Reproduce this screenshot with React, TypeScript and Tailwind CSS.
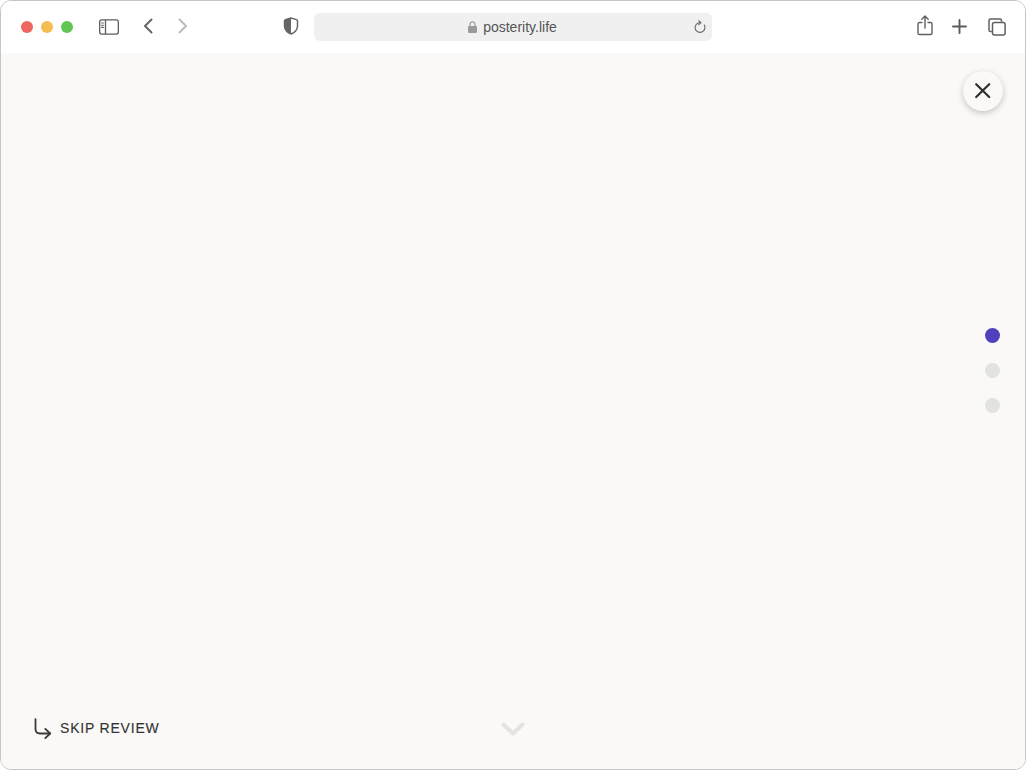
import React from "react";

function Sidebar() {
  return (
    <svg width="20" height="16" viewBox="0 0 20 16" fill="none" stroke="#5c5c5c" strokeWidth="1.3">
      <rect x="0.650" y="0.900" width="18.700" height="14.200" rx="2" />
      <path d="M6.500 1v14" />
      <path d="M2.200 4h2.600M2.200 6.200h2.600M2.200 8.400h2.600" strokeWidth="1.100" />
    </svg>
  );
}

function Chevron({ dir, color }: { dir: "l" | "r"; color: string }) {
  return (
    <svg className="-mt-[1px]" width="10" height="16" viewBox="0 0 10 16" fill="none" stroke={color} strokeWidth="2" strokeLinecap="round" strokeLinejoin="round">
      <path d={dir === "l" ? "M8.500 1.500 2 8l6.500 6.500" : "M1.500 1.500 8 8l-6.500 6.500"} />
    </svg>
  );
}

function Shield() {
  return (
    <svg className="-mt-[1px]" width="16" height="18" viewBox="0 0 16 18" fill="none">
      <path d="M8 1 2.500 2.600c-.6.2-1 .6-1 1.200V9c0 4 3.500 7 6.500 8 3-1 6.500-4 6.500-8V3.800c0-.6-.4-1-1-1.200L8 1Z" fill="#fff" stroke="#666" strokeWidth="1.500" />
      <path d="M8 1 2.500 2.600c-.6.2-1 .6-1 1.200V9c0 4 3.500 7 6.500 8V1Z" fill="#666" />
    </svg>
  );
}

function Lock() {
  return (
    <svg width="9" height="12" viewBox="0 0 9 12" fill="none">
      <path d="M2 5.500V3.400a2.500 2.500 0 0 1 5 0v2.100" stroke="#999" strokeWidth="1.200" />
      <rect x="0" y="5" width="9" height="7" rx="1.200" fill="#999" />
    </svg>
  );
}

function Reload() {
  return (
    <svg width="12" height="14" viewBox="0 0 12 14" fill="none" stroke="#666" strokeWidth="1.100" strokeLinecap="round" strokeLinejoin="round">
      <path d="M6 2.600a4.900 4.900 0 1 0 4.900 4.900c0-.9-.2-1.700-.6-2.400" />
      <path d="M4.800.6 7 2.600 4.800 4.600" />
    </svg>
  );
}

function Share() {
  return (
    <svg className="-mt-[2px]" width="16" height="21" viewBox="0 0 16 21" fill="none" stroke="#5f5f5f" strokeWidth="1.400" strokeLinecap="round" strokeLinejoin="round">
      <path d="M5 7.500H2.600c-.9 0-1.600.7-1.600 1.600v8.800c0 .9.7 1.600 1.600 1.600h10.800c.9 0 1.600-.7 1.600-1.600V9.100c0-.9-.7-1.600-1.600-1.600H11" />
      <path d="M8 13V1.200M4.800 4.200 8 1l3.200 3.200" />
    </svg>
  );
}

function Plus() {
  return (
    <svg width="15" height="15" viewBox="0 0 15 15" fill="none" stroke="#5c5c5c" strokeWidth="1.900" strokeLinecap="round">
      <path d="M7.500 1v13M1 7.500h13" />
    </svg>
  );
}

function Tabs() {
  return (
    <svg width="18" height="18" viewBox="0 0 18 18" fill="none" stroke="#5f5f5f" strokeWidth="1.500">
      <path d="M3.800 13.500H2.600C1.700 13.500 1 12.800 1 11.900V2.600C1 1.700 1.700 1 2.600 1h9.300c.9 0 1.600.7 1.600 1.600v1.200" />
      <rect x="4.500" y="4.500" width="12.600" height="12.600" rx="2" />
    </svg>
  );
}

function Close() {
  return (
    <svg width="16" height="16" viewBox="0 0 16 16" fill="none" stroke="#2f2f2f" strokeWidth="2.200" strokeLinecap="round">
      <path d="M1.200 1.200l13 12.800M14.200 1.200 1.200 14" />
    </svg>
  );
}

function SkipArrow() {
  return (
    <svg width="18" height="21" viewBox="0 0 18 21" fill="none" stroke="#3a3a3a" strokeWidth="1.800" strokeLinecap="round" strokeLinejoin="round">
      <path d="M1.500 1.200v9.800c0 3 2 4.500 4.500 4.500h10" />
      <path d="M11.300 10.800l4.900 4.700-4.900 4.700" />
    </svg>
  );
}

function DownChevron() {
  return (
    <svg width="24" height="14" viewBox="0 0 24 14" fill="none" stroke="#e3e3e1" strokeWidth="4" strokeLinecap="round" strokeLinejoin="round">
      <path d="M2.500 2.500 12 11.500l9.500-9" />
    </svg>
  );
}

export default function App() {
  return (
    <div className="w-[1026px] h-[770px] bg-white font-['Liberation_Sans',Arial,sans-serif]">
      <div className="w-full h-full border border-[#c6c6c6] rounded-[11px] overflow-hidden flex flex-col">
        <header className="h-[52px] shrink-0 bg-white flex items-center pl-[20px] pr-[19px] pb-[1px]">
          <div className="flex items-center gap-[8px]">
            <span className="w-[12px] h-[12px] rounded-full bg-[#ee675f]" />
            <span className="w-[12px] h-[12px] rounded-full bg-[#f5bc4f]" />
            <span className="w-[12px] h-[12px] rounded-full bg-[#62c554]" />
          </div>
          <div className="ml-[26px]"><Sidebar /></div>
          <div className="ml-[24px]"><Chevron dir="l" color="#666" /></div>
          <div className="ml-[25px]"><Chevron dir="r" color="#bcbcbc" /></div>
          <div className="ml-[95px]"><Shield /></div>
          <div className="ml-[15px] w-[398px] h-[28px] bg-[#f0f0f0] rounded-[6px] flex items-center pr-[6px]">
            <div className="flex-1 flex items-center justify-center gap-[6px] pl-[17px]">
              <Lock />
              <span className="text-[14px] leading-none text-[#555] pt-[1px]">posterity.life</span>
            </div>
            <Reload />
          </div>
          <div className="ml-auto flex items-center gap-[19px]">
            <Share />
            <Plus />
            <div className="ml-[2px]"><Tabs /></div>
          </div>
        </header>
        <main className="flex-1 bg-[#faf9f7] flex flex-col items-end">
          <button className="mt-[18px] mr-[22px] w-[40px] h-[40px] rounded-full bg-[#faf9f7] shadow-[0_2px_6px_rgba(0,0,0,0.22)] flex items-center justify-center">
            <Close />
          </button>
          <div className="mt-[217px] mr-[25px] flex flex-col gap-[20px]">
            <span className="w-[15px] h-[15px] rounded-full bg-[#5040bd]" />
            <span className="w-[15px] h-[15px] rounded-full bg-[#e2e2e0]" />
            <span className="w-[15px] h-[15px] rounded-full bg-[#e2e2e0]" />
          </div>
          <footer className="mt-auto w-full h-[62px] grid grid-cols-3 items-start pl-[33px]">
            <div className="flex items-center gap-[8px] h-[24px] pt-[3px] mt-[8px]">
              <SkipArrow />
              <span className="text-[14px] leading-none tracking-[0.8px] text-[#333] [-webkit-text-stroke:0.12px_#333] -mt-[2px]">SKIP REVIEW</span>
            </div>
            <div className="flex justify-center mt-[15px] -ml-[32px]"><DownChevron /></div>
          </footer>
        </main>
      </div>
    </div>
  );
}
